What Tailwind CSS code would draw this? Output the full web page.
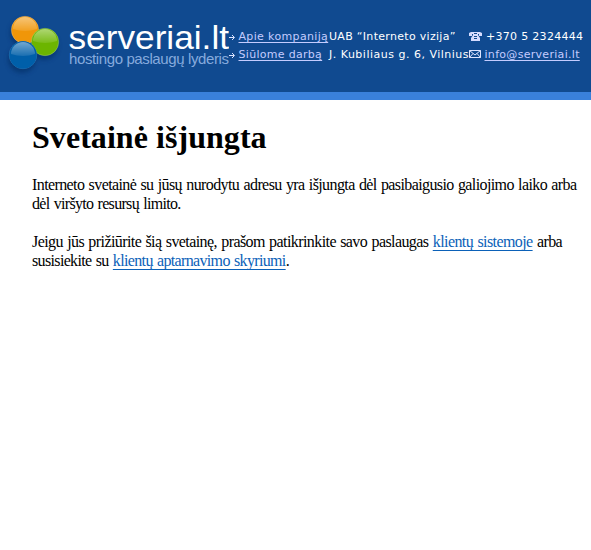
<!DOCTYPE html>
<html lang="lt">
<head>
<meta charset="utf-8">
<title>Svetainė išjungta</title>
<script src="https://cdn.jsdelivr.net/npm/@tailwindcss/browser@4"></script>
</head>
<body class="bg-white overflow-hidden">
<header class="flex h-[100px] w-full border-b-8 border-[#3980db] bg-[#104a90]">
  <svg class="h-[92px] w-[229px] shrink-0" viewBox="0 0 229 92" role="img">
    <defs>
      <linearGradient id="w" x1="0" y1="0" x2="0" y2="1"><stop offset="0" stop-color="#fff" stop-opacity=".45"/><stop offset="1" stop-color="#fff" stop-opacity=".1"/></linearGradient>
      <filter id="s" x="-30%" y="-30%" width="160%" height="170%"><feGaussianBlur stdDeviation="2"/></filter>
    </defs>
    <g fill="#062c60" opacity=".55" filter="url(#s)"><circle cx="24" cy="33" r="14"/><circle cx="44" cy="46" r="14"/><circle cx="22" cy="59" r="14"/></g>
    <g stroke="#fff" stroke-opacity=".25" stroke-width=".8">
      <circle cx="25" cy="30" r="13.700" fill="#f09609"/>
      <circle cx="45" cy="42" r="13.700" fill="#6cb500"/>
      <circle cx="23" cy="55" r="13.700" fill="#005fa9"/>
    </g>
    <path fill="url(#w)" d="M13 29a12 12 0 0 1 24 0q-12 4-24 0z"/>
    <path fill="url(#w)" d="M33 41a12 12 0 0 1 24 0q-12 4-24 0z"/>
    <circle cx="23" cy="55" r="13.700" fill="#005fa9"/>
    <path fill="url(#w)" d="M11 54a12 12 0 0 1 24 0q-12 4-24 0z"/>
    <text x="68.500" y="48.500" textLength="160.500" lengthAdjust="spacingAndGlyphs" class="fill-white font-['Liberation_Sans',sans-serif] text-[34px]">serveriai.lt</text>
    <text x="69" y="64" textLength="160" lengthAdjust="spacing" class="fill-[#86aadd] font-['Liberation_Sans',sans-serif] text-[15px]">hostingo paslaugų lyderis</text>
  </svg>
  <div class="grid grow grid-cols-[100px_140px_122px] grid-rows-[18px_18px] pt-[28px] font-['DejaVu_Sans',sans-serif] text-[11px] leading-[18px] tracking-[0.3px] whitespace-nowrap text-white">
    <div class="flex items-center"><svg class="mr-[2.500px] h-[7px] w-[7px]" viewBox="0 0 7 7" fill="none" stroke="#dce4ff"><path d="M0 3.500h5M3 1l2.500 2.500L3 6"/></svg><a class="text-[#c4ccff] underline underline-offset-2 tracking-[0.35px]">Apie kompaniją</a></div>
    <div>UAB “Interneto vizija”</div>
    <div class="flex items-center"><svg class="mr-1 mb-[2px] h-[9px] w-[13px]" viewBox="0 0 13 9"><path fill="#d5dcff" d="M2 0h9l2 1v3h-3V2H9v1l2 3v3H2V6l2-3V2H3v2H0V1z"/><path fill="#104a90" d="M5 1h3v1H5zM5 4h3v1H5zM5 6h3v1H5z"/></svg><span>+370 5 2324444</span></div>
    <div class="flex items-center"><svg class="mr-[2.500px] h-[7px] w-[7px]" viewBox="0 0 7 7" fill="none" stroke="#dce4ff"><path d="M0 3.500h5M3 1l2.500 2.500L3 6"/></svg><a class="text-[#c4ccff] underline underline-offset-2">Siūlome darbą</a></div>
    <div class="tracking-[0.5px]">J. Kubiliaus g. 6, Vilnius</div>
    <div class="flex items-center"><svg class="mr-[3.500px] mb-[2px] h-[8px] w-[12px]" viewBox="0 0 12 8" fill="none" stroke="#dce4ff"><path d="M.5.5h11v7H.5zL6 5l5.500-4.500M.5 7.500L4 3.500M11.500 7.500L8 3.500"/></svg><a class="text-[#c4ccff] underline underline-offset-2">info@serveriai.lt</a></div>
  </div>
</header>
<main class="pl-8 pt-[19px] font-['Liberation_Serif',serif] text-[16px] leading-[19px] tracking-[-0.6px] whitespace-nowrap text-black">
  <h1 class="text-[32px] leading-[37px] font-bold tracking-[0.05px]">Svetainė išjungta</h1>
  <div class="[word-spacing:0.85px]">
    <p class="mt-[19px]">Interneto svetainė su jūsų nurodytu adresu yra išjungta dėl pasibaigusio galiojimo laiko arba<br><span class="tracking-[-0.68px]">dėl viršyto resursų limito.</span></p>
    <p class="mt-[19px]"><span class="tracking-[-0.58px]">Jeigu jūs prižiūrite šią svetainę, prašom patikrinkite savo paslaugas <a class="text-[#0b61b8] underline underline-offset-3">klientų sistemoje</a> arba</span><br><span class="tracking-[-0.65px]">susisiekite su <a class="text-[#0b61b8] underline underline-offset-3">klientų aptarnavimo skyriumi</a>.</span></p>
  </div>
</main>
</body>
</html>
